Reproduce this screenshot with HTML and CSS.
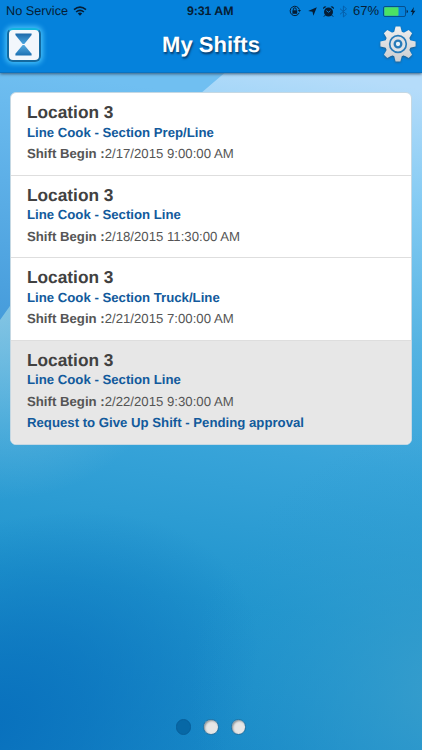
FILE: index.html
```html
<!DOCTYPE html>
<html lang="en">
<head>
<meta charset="utf-8">
<title>My Shifts</title>
<link rel="stylesheet" href="styles.css">
</head>
<body>
<div class="screen">
  <svg class="backdrop" viewBox="0 0 422 750" preserveAspectRatio="none" aria-hidden="true">
    <defs>
      <linearGradient id="base" gradientUnits="userSpaceOnUse" x1="300" y1="70" x2="190" y2="770">
        <stop offset="0" stop-color="#b5dcfa"/><stop offset=".16" stop-color="#84cbf3"/><stop offset=".36" stop-color="#54b3e2"/><stop offset=".54" stop-color="#38a4d9"/><stop offset=".76" stop-color="#2094cd"/><stop offset="1" stop-color="#1787c6"/>
      </linearGradient>
      <linearGradient id="corner" gradientUnits="userSpaceOnUse" x1="40" y1="70" x2="0" y2="320">
        <stop offset="0" stop-color="#70bff1"/><stop offset="1" stop-color="#469cdb"/>
      </linearGradient>
      <radialGradient id="shade" gradientUnits="userSpaceOnUse" cx="0" cy="0" r="1" gradientTransform="translate(-20 730) rotate(-28) scale(300 190)">
        <stop offset="0" stop-color="#0870bd"/><stop offset=".4" stop-color="#0870bd" stop-opacity=".65"/><stop offset="1" stop-color="#0870bd" stop-opacity="0"/>
      </radialGradient>
      <radialGradient id="glow" gradientUnits="userSpaceOnUse" cx="450" cy="690" r="260">
        <stop offset="0" stop-color="#3a9fcc" stop-opacity=".9"/><stop offset="1" stop-color="#2a9bd0" stop-opacity="0"/>
      </radialGradient>
      <radialGradient id="haze" gradientUnits="userSpaceOnUse" cx="0" cy="310" r="190">
        <stop offset="0" stop-color="#90c9e4" stop-opacity=".8"/><stop offset="1" stop-color="#7cc0e0" stop-opacity="0"/>
      </radialGradient>
    </defs>
    <rect width="422" height="750" fill="url(#base)"/>
    <rect width="422" height="750" fill="url(#shade)"/>
    <rect width="422" height="750" fill="url(#glow)"/>
    <rect y="300" width="200" height="210" fill="url(#haze)"/>
    <path d="M0 70H228Q96 180 0 320Z" fill="url(#corner)"/>
  </svg>

  <header class="header">
    <div class="status">
      <span class="carrier">No Service</span>
      <svg class="wifi" viewBox="0 0 14 10"><g fill="none" stroke="#051d35" stroke-width="1.6"><path d="M1 3.7Q7-1.4 13 3.7"/><path d="M3.1 6Q7 2.6 10.9 6"/></g><path d="M4.8 7.5Q7 5.7 9.2 7.5L7 9.8Z" fill="#051d35"/></svg>
      <span class="clock">9:31 AM</span>
      <svg class="lock" viewBox="0 0 12 12"><path d="M10.2 7.8A4.7 4.7 0 1 1 10.4 4.7" fill="none" stroke="#051d35"/><path d="M8.8 4.9h3.2l-1.5 2z" fill="#051d35"/><path d="M3.4 5.3h4.8v3.5H3.4z" fill="#051d35"/><path d="M4.4 5.4V4.2a1.4 1.4 0 0 1 2.8 0v1.2" fill="none" stroke="#051d35"/></svg>
      <svg class="arrow" viewBox="0 0 10 10"><path d="M9.8.2 6 9.8 5 5.3.2 4.4Z" fill="#051d35"/></svg>
      <svg class="alarm" viewBox="0 0 11 11"><circle cx="5.5" cy="6" r="4.5" fill="#051d35"/><path d="M.2 3A2 2 0 0 1 3.4.8ZM10.8 3A2 2 0 0 0 7.6.8Z" fill="#051d35"/><path d="M1.9 9.3.9 10.6M9.1 9.3l1 1.3" stroke="#051d35"/><path d="M3.3 4.5l2.2 1.8 2-1.6" fill="none" stroke="#0582dc" stroke-width=".9"/></svg>
      <svg class="bluetooth" viewBox="0 0 9 13"><path d="M1 3.7 7.5 9.2 4.4 12V1L7.5 3.8 1 9.3" fill="none" stroke="#0560ab"/></svg>
      <span class="percent">67%</span>
      <svg class="battery" viewBox="0 0 27 11"><rect x=".5" y=".5" width="22" height="10" rx="1.5" fill="none" stroke="#064f8d"/><rect x="1.3" y="1.3" width="14.2" height="8.4" rx=".6" fill="#4be164"/><path d="M23.7 3.7a2 2 0 0 1 0 3.6z" fill="#051d35"/></svg>
      <svg class="bolt" viewBox="0 0 6 10"><path d="M4 0 .3 5.6H2.5L1.5 10 5.7 4.2H3.3Z" fill="#051d35"/></svg>
    </div>
    <div class="titlebar">
      <button class="shift-button" aria-label="Shifts">
        <svg viewBox="0 0 17 23"><defs><linearGradient id="sand" x1="0" y1="0" x2="0" y2="1"><stop offset="0" stop-color="#1b68a9"/><stop offset="1" stop-color="#49a5df"/></linearGradient><linearGradient id="pile" x1="0" y1="0" x2="0" y2="1"><stop offset="0" stop-color="#55abe0"/><stop offset="1" stop-color="#1b70b2"/></linearGradient></defs><path d="M.4.4H16.6V2L9.3 11H7.7L.4 2Z" fill="url(#sand)"/><path d="M7.7 12h1.6l7.3 8.7v1.9H.4v-1.9Z" fill="url(#pile)"/></svg>
      </button>
      <h1 class="title">My Shifts</h1>
      <button class="gear-button" aria-label="Settings">
        <svg viewBox="-18 -18 36 36"><defs><linearGradient id="metal" gradientUnits="userSpaceOnUse" x1="0" y1="-18" x2="0" y2="18"><stop offset="0" stop-color="#efefef"/><stop offset="1" stop-color="#c9cdd1"/></linearGradient></defs>
        <g fill="url(#metal)"><circle r="12.8"/><path d="M-3.8-12-2.4-17.6H2.4L3.8-12V12L2.4 17.6H-2.4L-3.8 12Z"/><path d="M-17.6-2.4-12-3.8H12L17.6-2.4V2.4L12 3.8H-12L-17.6 2.4Z"/><path d="M-11.2-5.8-14.1-10.7-10.7-14.1-5.8-11.2 11.2 5.8 14.1 10.7 10.7 14.1 5.8 11.2Z"/><path d="M11.2-5.8 14.1-10.7 10.7-14.1 5.8-11.2-11.2 5.8-14.1 10.7-10.7 14.1-5.8 11.2Z"/></g>
        <circle r="8.3" fill="#dfe2e5" stroke="#277bb9" stroke-width="1.7"/><circle r="3.3" fill="#e5f1f8" stroke="#277bb9" stroke-width="2.3"/></svg>
      </button>
    </div>
  </header>

  <main class="content">
    <ul class="shifts">
      <li class="shift"><h2>Location 3</h2><p class="role">Line Cook - Section Prep/Line</p><p class="time"><b>Shift Begin :</b>2/17/2015 9:00:00 AM</p></li>
      <li class="shift"><h2>Location 3</h2><p class="role">Line Cook - Section Line</p><p class="time"><b>Shift Begin :</b>2/18/2015 11:30:00 AM</p></li>
      <li class="shift"><h2>Location 3</h2><p class="role">Line Cook - Section Truck/Line</p><p class="time"><b>Shift Begin :</b>2/21/2015 7:00:00 AM</p></li>
      <li class="shift pending"><h2>Location 3</h2><p class="role">Line Cook - Section Line</p><p class="time"><b>Shift Begin :</b>2/22/2015 9:30:00 AM</p><p class="request">Request to Give Up Shift - Pending approval</p></li>
    </ul>
  </main>

  <nav class="pager"><i class="dot current"></i><i class="dot"></i><i class="dot"></i></nav>
</div>
</body>
</html>
```

FILE: styles.css
```css
* { box-sizing: border-box; }
body, h1, h2, p, ul { margin: 0; padding: 0; }
body { font-family: "Liberation Sans", Arial, sans-serif; text-rendering: geometricPrecision; }
button { padding: 0; border: 0; background: none; }
svg { display: block; flex: none; }

.screen { position: relative; width: 422px; height: 750px; overflow: hidden; display: flex; flex-direction: column; }
.backdrop { position: absolute; inset: 0; width: 100%; height: 100%; z-index: -1; }

.header { height: 73px; flex: none; background: #0582dc; border-bottom: 1px solid #0b72c0; box-shadow: 0 1px 3px #3b5e7b; }
.status { height: 22px; padding: 0 6px; display: flex; align-items: center; color: #051d35; font-size: 12.7px; line-height: 22px; white-space: nowrap; }
.carrier { width: 67px; }
.wifi { width: 14px; height: 10px; }
.clock { width: 50px; margin-left: 100px; font-weight: bold; font-size: 12.4px; letter-spacing: -.1px; }
.lock { width: 12px; height: 12px; margin-left: 52px; }
.arrow { width: 9px; height: 9px; margin-left: 7px; }
.alarm { width: 11px; height: 11px; margin-left: 6px; }
.bluetooth { width: 9px; height: 13px; margin-left: 5px; }
.percent { width: 27px; margin-left: 5px; font-size: 13px; }
.battery { width: 27px; height: 11px; margin-left: 3px; }
.bolt { width: 6px; height: 9px; }

.titlebar { height: 50px; padding: 0 6px; display: grid; grid-template-columns: 36px 1fr 36px; align-items: start; }
.shift-button { width: 34px; height: 34px; margin: 6px 0 0 1px; display: grid; place-items: center; background: #f2f7fc; border: 2px solid #13699f; border-top-color: #11b6de; border-radius: 6px; box-shadow: 0 0 5px 2px #43bdf8; }
.shift-button svg { width: 17px; height: 23px; margin: -1px 1px 0 0; }
.title { margin-top: 9px; text-align: center; color: #fff; font-size: 22px; line-height: 28px; text-shadow: 1px 2px 2px #093d6d; }
.gear-button svg { width: 36px; height: 36px; margin-top: 4px; filter: drop-shadow(0 1px 1px #245a83); }

.content { flex: 1; padding: 19px 10px 0; }
.shifts { list-style: none; width: 402px; height: 353px; overflow: hidden; background: #fff; border: 1px solid #c5d8e3; border-radius: 6px; }
.shift { height: 82.5px; padding: 9.3px 16px 0; border-bottom: 1px solid #dedede; }
.shift h2 { color: #414141; font-size: 17.3px; line-height: 20px; }
.shift p { font-size: 13.2px; line-height: 21px; }
.shift .role { color: #125a9c; font-weight: bold; line-height: 19px; margin-top: .7px; }
.shift .time { color: #555; margin-top: 1.2px; }
.shift .request { color: #125a9c; font-weight: bold; margin-top: .5px; }
.pending { height: 105px; background: #e7e7e7; border: 0; }

.pager { height: 31px; flex: none; display: flex; justify-content: center; gap: 12px; }
.dot { width: 15.5px; height: 15.5px; border: 1px solid #176ca0; border-radius: 50%; background: #e6e6e6; box-shadow: inset 1px 1px 2px #8c9295; }
.dot.current { background: #0768a6; border-color: #075f9b; box-shadow: none; }
```
